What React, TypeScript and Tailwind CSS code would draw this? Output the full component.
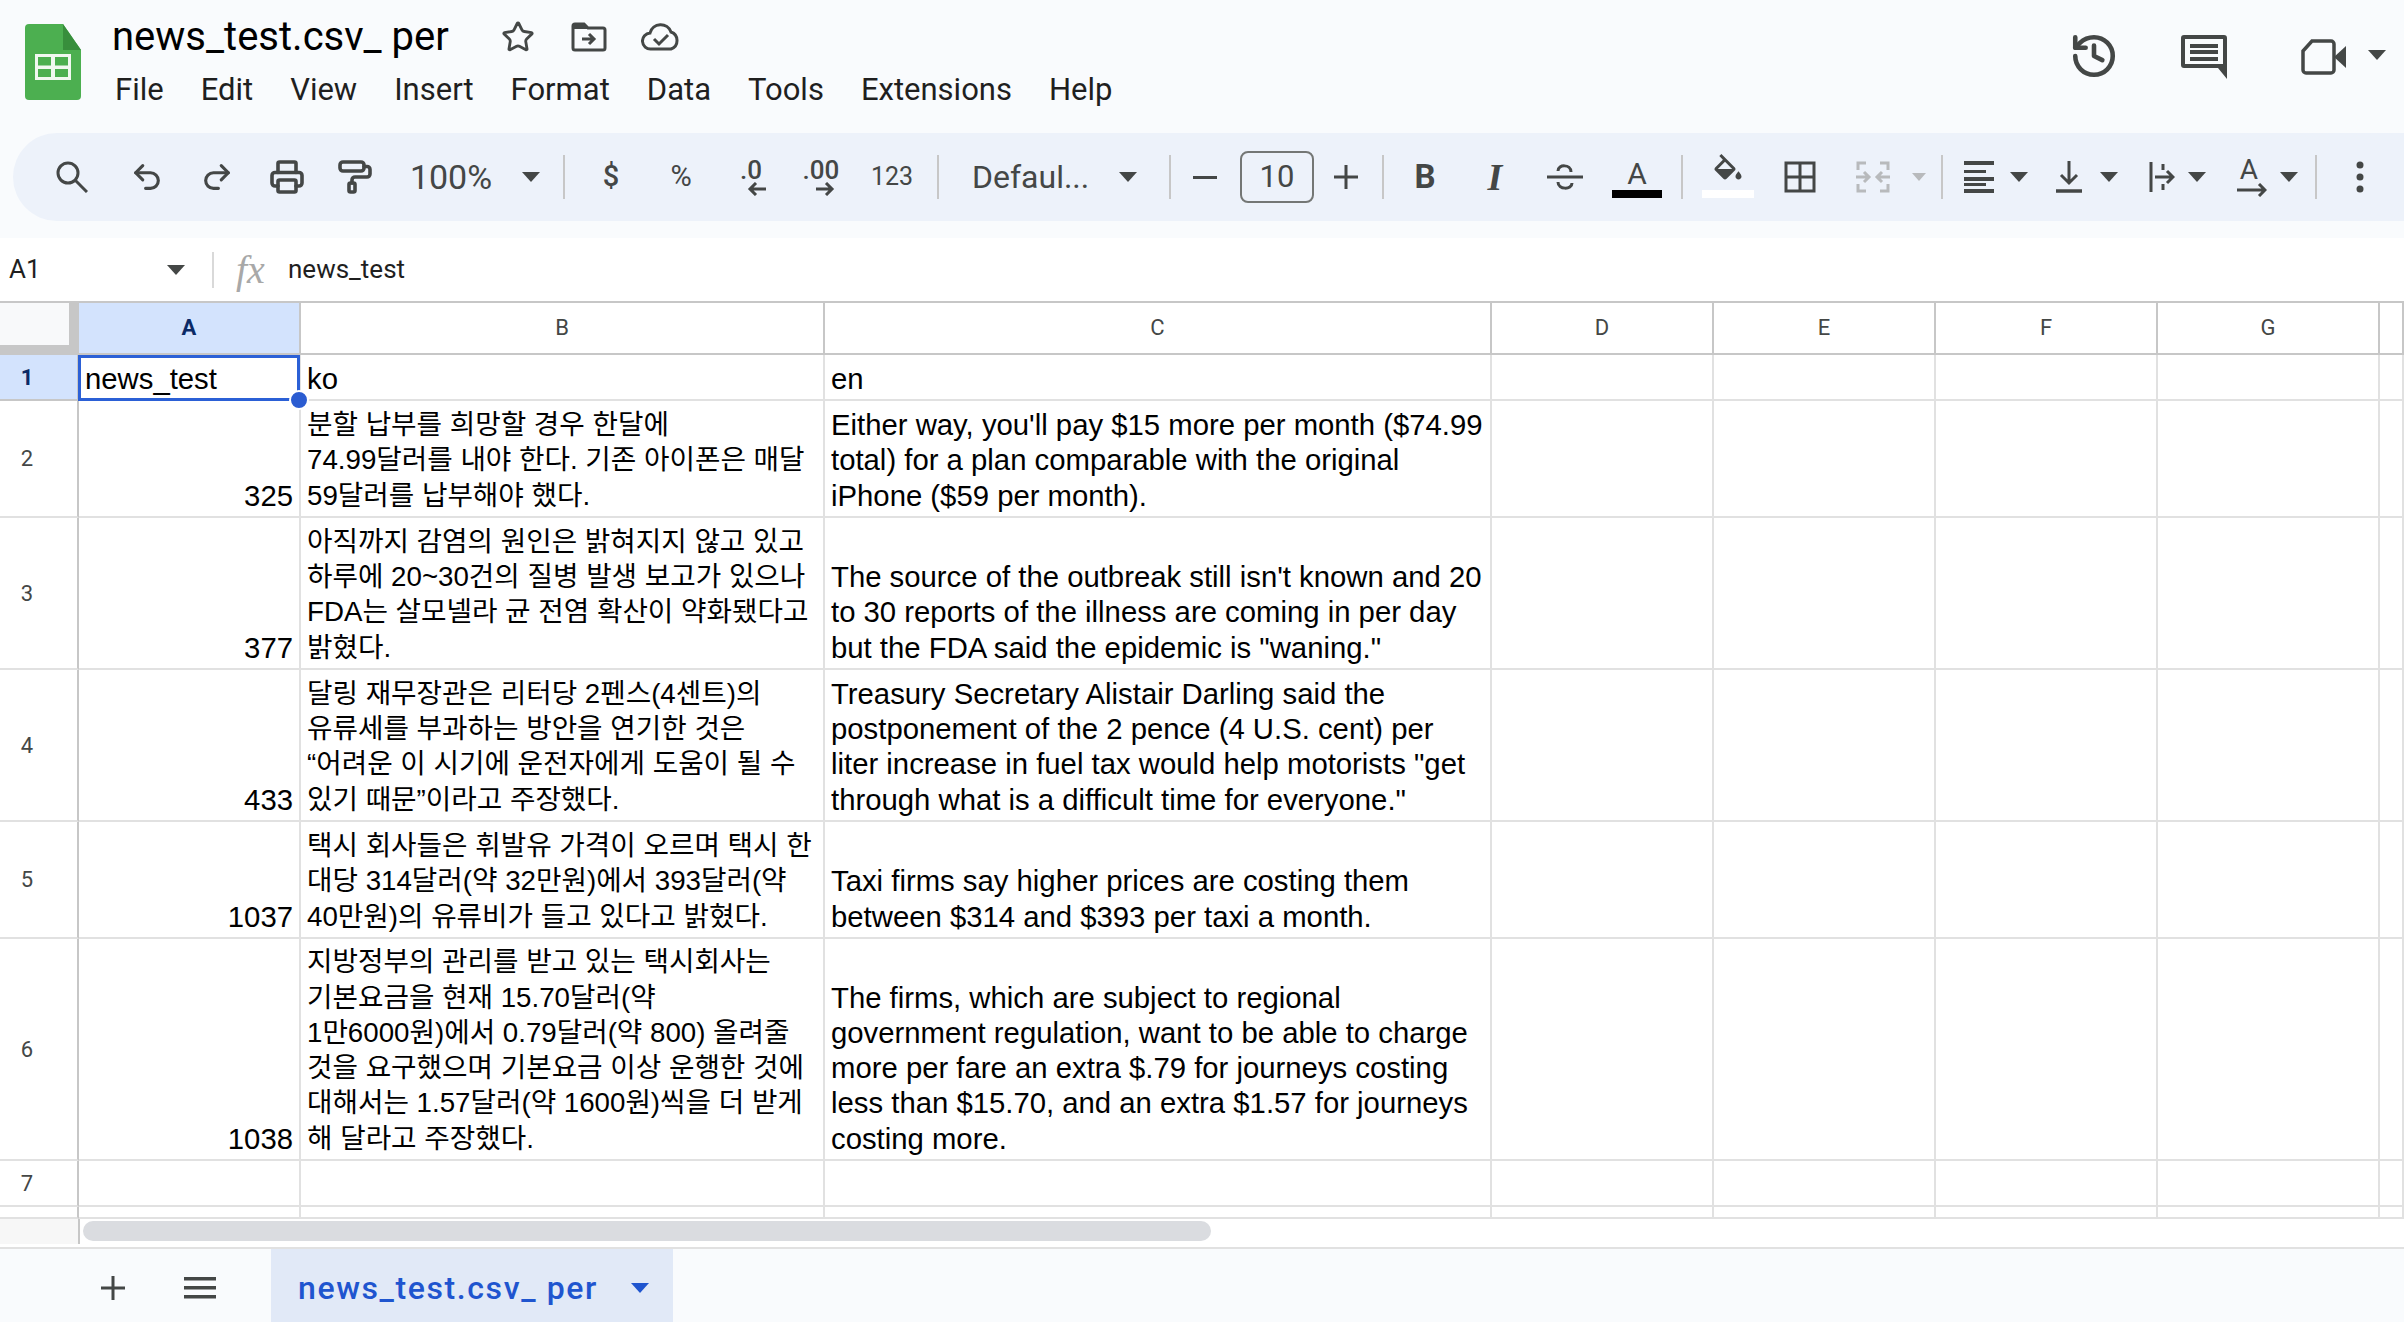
import type { ReactNode } from "react";
import { History, PaintRoller, Printer, Redo2, Star, Undo2 } from "lucide-react";

const ICON = "#444746";
const GRID_COLS = "grid grid-cols-[79px_222px_524px_667px_222px_222px_222px_222px_24px]";

function Caret({ color = ICON }: { color?: string }) {
  return (
    <svg width="18" height="10" viewBox="0 0 18 10">
      <path d="M0 0h18L9 10z" fill={color} />
    </svg>
  );
}

function Slot({ className, children }: { className: string; children?: ReactNode }) {
  return <div className={`flex h-full shrink-0 items-center justify-center ${className}`}>{children}</div>;
}

function Sep() {
  return <div className="h-[44px] w-[2px] bg-[#c7c7c7]" />;
}

function Logo() {
  return (
    <svg width="56" height="76" viewBox="0 0 56 76">
      <path d="M4 0h34l18 26v46a4 4 0 0 1-4 4H4a4 4 0 0 1-4-4V4a4 4 0 0 1 4-4z" fill="#4caf50" />
      <path d="M38 0l18 26H38z" fill="#388e3c" />
      <path d="M10 30h36v26H10z M13 33v8.500h13V33z M30 33v8.500h13V33z M13 45v8h13v-8z M30 45v8h13v-8z" fill="#f1f8f1" fillRule="evenodd" />
    </svg>
  );
}

function MenuBar() {
  return (
    <div className="ml-[3px] mt-[12px] flex gap-[37px] text-[31px] leading-[36px] text-[#1f1f1f]">
      {["File", "Edit", "View", "Insert", "Format", "Data", "Tools", "Extensions", "Help"].map((m) => (
        <span key={m}>{m}</span>
      ))}
    </div>
  );
}

function TitleBar() {
  return (
    <div className="flex h-[133px] shrink-0">
      <div className="ml-[25px] mt-[24px]">
        <Logo />
      </div>
      <div className="ml-[31px] mt-[14px] flex flex-col">
        <div className="flex h-[46px] items-center">
          <span className="w-[380px] text-[40px] leading-[46px] text-black">news_test.csv_ per</span>
          <Star size={34} color={ICON} strokeWidth={2} className="ml-[9px]" />
          <svg width="36" height="30" viewBox="0 0 36 30" fill="none" className="ml-[36px]">
            <path d="M2 4a2 2 0 0 1 2-2h9l4 4h15a2 2 0 0 1 2 2v18a2 2 0 0 1-2 2H4a2 2 0 0 1-2-2z" stroke={ICON} strokeWidth="3" />
            <path d="M2 3h11l4 4H2z" fill={ICON} />
            <path d="M11 17h12M18 12l5 5-5 5" stroke={ICON} strokeWidth="3" />
          </svg>
          <svg width="40" height="30" viewBox="0 0 40 30" fill="none" className="ml-[34px]">
            <path d="M10 27a8 8 0 0 1-1-16 11 11 0 0 1 21-1 9 9 0 0 1 0 17z" stroke={ICON} strokeWidth="3" />
            <path d="M13 17l5 5 9-9" stroke={ICON} strokeWidth="3" />
          </svg>
        </div>
        <MenuBar />
      </div>
      <div className="ml-auto flex">
        <History size={50} color={ICON} strokeWidth={2.2} className="mr-[62px] mt-[31px]" />
        <svg width="46" height="44" viewBox="0 0 46 44" fill="none" className="mr-[74px] mt-[35px]">
          <path d="M3 0h40a3 3 0 0 1 3 3v41l-9-11H3a3 3 0 0 1-3-3V3a3 3 0 0 1 3-3z" fill={ICON} />
          <rect x="4" y="4" width="38" height="25" fill="#f9fbfd" />
          <path d="M9 9h28v4H9zM9 15h28v4H9zM9 22h28v4H9z" fill={ICON} />
        </svg>
        <svg width="46" height="36" viewBox="0 0 46 36" fill="none" className="mr-[21px] mt-[39px]">
          <path d="M11 2h19a3 3 0 0 1 3 3v26a3 3 0 0 1-3 3H5a3 3 0 0 1-3-3V12z" stroke={ICON} strokeWidth="3.500" />
          <path d="M33 18l12-11v22z" fill={ICON} />
        </svg>
        <div className="mr-[18px] mt-[50px]">
          <Caret />
        </div>
      </div>
    </div>
  );
}

function DecimalIcon({ label, dir }: { label: string; dir: "left" | "right" }) {
  return (
    <div className="flex flex-col items-center text-[26px] leading-[24px] text-[#444746]">
      <span className="font-medium">{label}</span>
      <svg width="20" height="14" viewBox="0 0 20 14" fill="none" className={dir === "left" ? "ml-[12px]" : "ml-[8px]"}>
        {dir === "left" ? (
          <path d="M19 7H3M9 1L3 7l6 6" stroke={ICON} strokeWidth="3" />
        ) : (
          <path d="M1 7h16M11 1l6 6-6 6" stroke={ICON} strokeWidth="3" />
        )}
      </svg>
    </div>
  );
}

function Toolbar() {
  return (
    <div className="ml-[13px] flex h-[88px] shrink-0 items-center rounded-l-[44px] bg-[#edf2fa] pl-[22px] text-[#444746]">
      <Slot className="w-[74px]">
        <svg width="32" height="32" viewBox="0 0 32 32" fill="none">
          <circle cx="12" cy="12" r="10" stroke={ICON} strokeWidth="3" />
          <path d="M19 19l12 12" stroke={ICON} strokeWidth="3" />
        </svg>
      </Slot>
      <Slot className="w-[76px]"><Undo2 size={34} color={ICON} strokeWidth={2.2} /></Slot>
      <Slot className="w-[64px]"><Redo2 size={34} color={ICON} strokeWidth={2.2} /></Slot>
      <Slot className="w-[76px]"><Printer size={36} color={ICON} strokeWidth={2.4} /></Slot>
      <Slot className="w-[60px]"><PaintRoller size={36} color={ICON} strokeWidth={2.4} /></Slot>
      <Slot className="w-[126px] pl-[6px] text-[34px]">100%</Slot>
      <Slot className="w-[40px]"><Caret /></Slot>
      <Slot className="w-[25px]"><Sep /></Slot>
      <Slot className="w-[70px] text-[29px] font-medium">$</Slot>
      <Slot className="w-[70px] text-[29px]">%</Slot>
      <Slot className="w-[70px]"><DecimalIcon label=".0" dir="left" /></Slot>
      <Slot className="w-[70px]"><DecimalIcon label=".00" dir="right" /></Slot>
      <Slot className="w-[72px] text-[25px]">123</Slot>
      <Slot className="w-[20px]"><Sep /></Slot>
      <Slot className="w-[160px] !justify-start pl-[24px] text-[32px]">Defaul...</Slot>
      <Slot className="w-[40px]"><Caret /></Slot>
      <Slot className="w-[44px]"><Sep /></Slot>
      <Slot className="w-[26px]">
        <svg width="24" height="3" viewBox="0 0 24 3"><rect width="24" height="3" fill={ICON} /></svg>
      </Slot>
      <div className="ml-[22px] flex h-[52px] w-[74px] shrink-0 items-center justify-center rounded-[8px] border-2 border-[#747775] text-[31px]">10</div>
      <Slot className="w-[64px]">
        <svg width="24" height="24" viewBox="0 0 24 24"><path d="M10.500 0h3v10.500H24v3H13.500V24h-3V13.500H0v-3h10.500z" fill={ICON} /></svg>
      </Slot>
      <Slot className="w-[10px]"><Sep /></Slot>
      <Slot className="w-[72px] pl-[2px] text-[33px] font-bold">B</Slot>
      <Slot className="w-[70px] font-['Liberation_Serif'] text-[38px] font-bold italic">I</Slot>
      <Slot className="w-[70px]">
        <svg width="36" height="28" viewBox="0 0 36 28" fill="none">
          <path d="M0 14h36" stroke={ICON} strokeWidth="3" />
          <path d="M24 9c0-8-13-8-13-1M11 19c0 8 14 8 14 1" stroke={ICON} strokeWidth="3" />
        </svg>
      </Slot>
      <Slot className="w-[74px]">
        <div className="relative flex h-[52px] w-[50px] flex-col items-center">
          <span className="mt-[9px] text-[30px] leading-[28px] text-[#444746]">A</span>
          <div className="absolute bottom-[5px] left-0 h-[8px] w-[50px] bg-black" />
        </div>
      </Slot>
      <Slot className="w-[16px]"><Sep /></Slot>
      <Slot className="w-[76px]">
        <div className="relative flex h-[46px] w-[52px] flex-col items-center">
          <svg width="36" height="36" viewBox="0 0 24 24">
            <path d="M16.560 8.940L7.620 0 6.210 1.410l2.380 2.380-5.150 5.150c-.59.59-.59 1.540 0 2.120l5.500 5.500c.29.29.68.44 1.060.44s.77-.15 1.060-.44l5.500-5.500c.59-.58.59-1.530 0-2.120zM5.210 10L10 5.210 14.790 10H5.210zM19 11.500s-2 2.170-2 3.500c0 1.100.9 2 2 2s2-.9 2-2c0-1.330-2-3.500-2-3.500z" fill={ICON} />
          </svg>
          <div className="absolute bottom-[2px] left-0 h-[8px] w-[52px] bg-white" />
        </div>
      </Slot>
      <Slot className="w-[68px]">
        <svg width="32" height="32" viewBox="0 0 32 32" fill="none">
          <path d="M2 2h28v28H2zM16 2v28M2 16h28" stroke={ICON} strokeWidth="3" />
        </svg>
      </Slot>
      <Slot className="w-[78px]">
        <svg width="34" height="32" viewBox="0 0 34 32" fill="none" stroke="#b8babc" strokeWidth="3">
          <path d="M10 2H2v7M24 2h8v7M10 30H2v-7M24 30h8v-7M0 16h13M8 11l5 5-5 5M34 16H21M26 11l-5 5 5 5" />
        </svg>
      </Slot>
      <Slot className="w-[14px]"><Caret color="#b8babc" /></Slot>
      <Slot className="w-[32px]"><Sep /></Slot>
      <Slot className="w-[42px]">
        <svg width="30" height="32" viewBox="0 0 30 32"><path d="M0 0h30v4H0zM0 9h22v3H0zM0 16h30v4H0zM0 25h22v-3H0zM0 28h30v4H0z" fill={ICON} /></svg>
      </Slot>
      <Slot className="w-[38px]"><Caret /></Slot>
      <Slot className="w-[62px]">
        <svg width="28" height="32" viewBox="0 0 28 32" fill="none"><path d="M14 0v22M6 14l8 8 8-8" stroke={ICON} strokeWidth="3" /><path d="M1 30h26" stroke={ICON} strokeWidth="3.500" /></svg>
      </Slot>
      <Slot className="w-[18px]"><Caret /></Slot>
      <Slot className="w-[57px] !justify-end">
        <svg width="26" height="30" viewBox="0 0 26 30" fill="none">
          <path d="M2 0v30" stroke={ICON} strokeWidth="3" />
          <path d="M14 2v6M14 22v6" stroke={ICON} strokeWidth="3" />
          <path d="M6 15h18M18 9l6 6-6 6" stroke={ICON} strokeWidth="3" />
        </svg>
      </Slot>
      <Slot className="w-[43px]"><Caret /></Slot>
      <Slot className="w-[62px]">
        <div className="flex flex-col items-center">
          <span className="h-[26px] text-[28px] leading-[26px]">A</span>
          <svg width="30" height="14" viewBox="0 0 30 14" fill="none" className="ml-[6px]"><path d="M0 7h28M22 1l6 6-6 6" stroke={ICON} strokeWidth="3" /></svg>
        </div>
      </Slot>
      <Slot className="w-[18px]"><Caret /></Slot>
      <Slot className="w-[36px]"><Sep /></Slot>
      <Slot className="w-[52px]">
        <svg width="8" height="32" viewBox="0 0 8 32"><circle cx="4" cy="4" r="3.500" fill={ICON} /><circle cx="4" cy="16" r="3.500" fill={ICON} /><circle cx="4" cy="28" r="3.500" fill={ICON} /></svg>
      </Slot>
    </div>
  );
}

function FormulaBar() {
  return (
    <div className="mt-[17px] flex h-[63px] shrink-0 items-center bg-white">
      <span className="ml-[9px] w-[158px] text-[26px] text-[#1f1f1f]">A1</span>
      <Caret />
      <div className="ml-[27px] h-[36px] w-[2px] bg-[#d9d9d9]" />
      <span className="ml-[22px] w-[52px] font-['Liberation_Serif'] text-[40px] italic leading-none text-[#a8a8a8]">fx</span>
      <span className="text-[26px] text-[#1f1f1f]">news_test</span>
    </div>
  );
}

function HeaderRow() {
  return (
    <div className={`${GRID_COLS} h-[54px] border-y-2 border-[#c7c7c7] text-[22px] text-[#444746]`}>
      <div className="border-r-[10px] border-b-[8px] border-[#c7c7c7] bg-[#f8f9fa]" />
      {["A", "B", "C", "D", "E", "F", "G", ""].map((col) => (
        <div
          key={col}
          className={`flex items-center justify-center border-r-2 border-[#c7c7c7] pb-[2px] ${
            col === "A" ? "bg-[#d3e3fd] font-bold text-[#0b2a66]" : "bg-white"
          }`}
        >
          {col}
        </div>
      ))}
    </div>
  );
}

interface RowData {
  num: string;
  heightClass: string;
  a?: string;
  b?: string[];
  c?: string[];
}

const ROWS: RowData[] = [
  {
    num: "2",
    heightClass: "h-[117px]",
    a: "325",
    b: ["분할 납부를 희망할 경우 한달에", "74.99달러를 내야 한다. 기존 아이폰은 매달", "59달러를 납부해야 했다."],
    c: ["Either way, you'll pay $15 more per month ($74.99", "total) for a plan comparable with the original", "iPhone ($59 per month)."],
  },
  {
    num: "3",
    heightClass: "h-[152px]",
    a: "377",
    b: ["아직까지 감염의 원인은 밝혀지지 않고 있고", "하루에 20~30건의 질병 발생 보고가 있으나", "FDA는 살모넬라 균 전염 확산이 약화됐다고", "밝혔다."],
    c: ["The source of the outbreak still isn't known and 20", "to 30 reports of the illness are coming in per day", 'but the FDA said the epidemic is "waning."'],
  },
  {
    num: "4",
    heightClass: "h-[152px]",
    a: "433",
    b: ["달링 재무장관은 리터당 2펜스(4센트)의", "유류세를 부과하는 방안을 연기한 것은", "“어려운 이 시기에 운전자에게 도움이 될 수", "있기 때문”이라고 주장했다."],
    c: ["Treasury Secretary Alistair Darling said the", "postponement of the 2 pence (4 U.S. cent) per", 'liter increase in fuel tax would help motorists "get', 'through what is a difficult time for everyone."'],
  },
  {
    num: "5",
    heightClass: "h-[117px]",
    a: "1037",
    b: ["택시 회사들은 휘발유 가격이 오르며 택시 한", "대당 314달러(약 32만원)에서 393달러(약", "40만원)의 유류비가 들고 있다고 밝혔다."],
    c: ["Taxi firms say higher prices are costing them", "between $314 and $393 per taxi a month."],
  },
  {
    num: "6",
    heightClass: "h-[222px]",
    a: "1038",
    b: ["지방정부의 관리를 받고 있는 택시회사는", "기본요금을 현재 15.70달러(약", "1만6000원)에서 0.79달러(약 800) 올려줄", "것을 요구했으며 기본요금 이상 운행한 것에", "대해서는 1.57달러(약 1600원)씩을 더 받게", "해 달라고 주장했다."],
    c: ["The firms, which are subject to regional", "government regulation, want to be able to charge", "more per fare an extra $.79 for journeys costing", "less than $15.70, and an extra $1.57 for journeys", "costing more."],
  },
  { num: "7", heightClass: "h-[46px]" },
];

const CELL = "flex flex-col justify-end whitespace-nowrap border-r-2 border-b-2 border-[#e1e1e1] pb-[3px] pl-[6px] leading-[35.300px]";

function Row({ row }: { row: RowData }) {
  return (
    <div className={`${GRID_COLS} ${row.heightClass} text-[29.300px] text-black`}>
      <div className="flex items-center border-r-2 border-b-2 border-[#c7c7c7] border-b-[#e1e1e1] bg-white">
        <span className="w-[54px] text-center font-['Roboto'] text-[22px] text-[#444746]">{row.num}</span>
      </div>
      <div className={`${CELL} pr-[6px] text-right`}>{row.a}</div>
      <div className={`${CELL} overflow-hidden text-[27.700px]`}>
        {row.b?.map((line) => <span key={line}>{line}</span>)}
      </div>
      <div className={`${CELL} overflow-hidden`}>
        {row.c?.map((line) => <span key={line}>{line}</span>)}
      </div>
      <div className={CELL} />
      <div className={CELL} />
      <div className={CELL} />
      <div className={CELL} />
      <div className={CELL} />
    </div>
  );
}

function FirstRow() {
  return (
    <div className={`${GRID_COLS} h-[46px] text-[29.300px] text-black`}>
      <div className="flex items-center border-r-2 border-b-2 border-[#c7c7c7] bg-[#d3e3fd]">
        <span className="w-[54px] text-center font-['Roboto'] text-[22px] font-bold text-[#0b2a66]">1</span>
      </div>
      <div className={`${CELL} relative`}>
        news_test
        <div className="absolute inset-x-[-1px] bottom-[-2px] top-0 border-[3px] border-[#2b60d6]" />
        <div className="absolute bottom-[-11px] right-[-10px] z-10 h-[20px] w-[20px] rounded-full border-2 border-white bg-[#2b5cd1]" />
      </div>
      <div className={CELL}>ko</div>
      <div className={CELL}>en</div>
      <div className={CELL} />
      <div className={CELL} />
      <div className={CELL} />
      <div className={CELL} />
      <div className={CELL} />
    </div>
  );
}

function PartialRow() {
  return (
    <div className={`${GRID_COLS} h-[12px]`}>
      <div className="border-r-2 border-b-2 border-[#c7c7c7] border-b-[#e1e1e1]" />
      {["a", "b", "c", "d", "e", "f", "g", "h"].map((k) => (
        <div key={k} className="border-r-2 border-b-2 border-[#e1e1e1]" />
      ))}
    </div>
  );
}

function ScrollBar() {
  return (
    <div className="flex h-[28px] shrink-0">
      <div className="h-[25px] w-[80px] border-r-2 border-[#c7c7c7] bg-[#f7f7f7]" />
      <div className="ml-[3px] mt-[2px] h-[20px] w-[1128px] rounded-[10px] bg-[#dadce0]" />
    </div>
  );
}

function SheetTabs() {
  return (
    <div className="flex flex-1 items-stretch border-t-2 border-[#e1e1e1] bg-[#f9fbfd]">
      <div className="flex w-[271px] shrink-0 items-center pt-[4px]">
        <svg width="24" height="24" viewBox="0 0 24 24" className="ml-[101px]">
          <path d="M10.500 0h3v10.500H24v3H13.500V24h-3V13.500H0v-3h10.500z" fill={ICON} />
        </svg>
        <svg width="32" height="22" viewBox="0 0 32 22" className="ml-[59px]">
          <path d="M0 0h32v3.500H0zM0 9h32v3.500H0zM0 18h32v3.500H0z" fill={ICON} />
        </svg>
      </div>
      <div className="flex w-[402px] items-center bg-[#e1e9f7] pl-[27px] pt-[4px] text-[32px] font-medium tracking-[1.600px] text-[#1f55cf]">
        <span className="w-[333px]">news_test.csv_ per</span>
        <Caret color="#1f55cf" />
      </div>
    </div>
  );
}

export default function App() {
  return (
    <div className="flex h-[1322px] w-[2404px] flex-col overflow-hidden bg-[#f9fbfd] font-['Roboto',sans-serif]">
      <TitleBar />
      <Toolbar />
      <FormulaBar />
      <div className="flex shrink-0 flex-col bg-white font-['Liberation_Sans','Noto_Sans_CJK_KR',sans-serif]">
        <div className="font-['Roboto']">
          <HeaderRow />
        </div>
        <FirstRow />
        {ROWS.map((row) => (
          <Row key={row.num} row={row} />
        ))}
        <PartialRow />
        <ScrollBar />
      </div>
      <SheetTabs />
    </div>
  );
}
